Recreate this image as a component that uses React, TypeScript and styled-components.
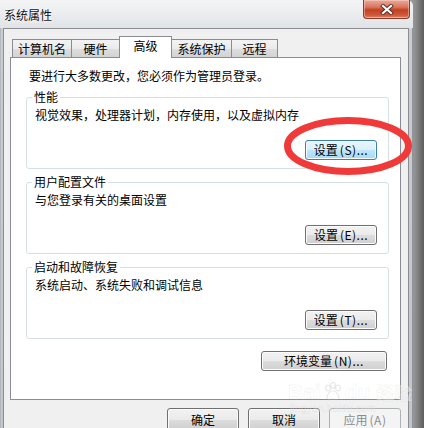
import React from 'react'
import styled, { createGlobalStyle, css } from 'styled-components'

const GlobalStyle = createGlobalStyle`
  html, body {
    margin: 0;
    padding: 0;
    background: #6f6f6f;
  }
  body {
    font-family: 'Noto Sans CJK SC', 'Liberation Sans', sans-serif;
    font-size: 12px;
    color: #000;
  }
`

const Screen = styled.div`
  position: relative;
  width: 424px;
  height: 428px;
  overflow: hidden;
  display: flex;
  background: linear-gradient(to right, #c4c4c4 0px, #9a9a9a 412px, #8c8c8c 416px, #5e5e5e 424px);
`

const Window = styled.div`
  width: 413px;
  height: 440px;
  flex: none;
  display: flex;
  flex-direction: column;
  box-sizing: border-box;
  padding: 0 4px 0 3px;
  border-top-right-radius: 6px;
  background: linear-gradient(to bottom, #eceef0 0px, #e2e5e8 28px, #c9cdd2 29px, #c2c6cb 100%);
  box-shadow: inset -1px 0 0 #8f949a, inset 1px 0 0 #b5b9be;
`

const TitleBar = styled.div`
  height: 28px;
  flex: none;
  margin: 0 -4px 0 -3px;
  display: flex;
  justify-content: space-between;
  align-items: flex-start;
  background: linear-gradient(to bottom, #f3f4f6, #e1e4e8);
  border-top-right-radius: 6px;
`

const Title = styled.div`
  padding: 8px 0 0 4px;
  line-height: 14px;
  font-size: 12px;
  color: #111;
  text-shadow: 0 0 4px #fff, 0 0 2px #fff;
`

const CloseButton = styled.div`
  width: 47px;
  height: 19px;
  margin-right: 3px;
  box-sizing: border-box;
  display: flex;
  align-items: center;
  justify-content: center;
  border: 1px solid #8a3b2c;
  border-top: none;
  border-radius: 0 0 4px 4px;
  background: linear-gradient(to bottom, #e9ab9b 0%, #d8755f 40%, #c3401f 55%, #cf5a3c 85%, #e08a6a 100%);
  box-shadow: inset 0 0 0 1px rgba(255, 220, 210, 0.45);
`

const Client = styled.div`
  flex: 1;
  display: flex;
  flex-direction: column;
  box-sizing: border-box;
  padding: 7px 0 0 6px;
  background: #f0f0f0;
  border: 1px solid #8b8d90;
  border-bottom: none;
`

const TabStrip = styled.div`
  height: 21px;
  display: flex;
  align-items: flex-end;
  margin-left: 2px;
`

const Tab = styled.div<{ $w: number; $active?: boolean }>`
  width: ${p => p.$w}px;
  box-sizing: border-box;
  margin-left: -1px;
  display: flex;
  justify-content: center;
  line-height: 16px;
  font-size: 12px;
  border: 1px solid #898c95;
  border-bottom: none;
  ${p =>
    p.$active
      ? css`
          height: 22px;
          margin-bottom: -1px;
          padding-top: 1px;
          align-items: flex-start;
          background: #fff;
          position: relative;
          z-index: 1;
        `
      : css`
          height: 18px;
          align-items: center;
          background: linear-gradient(to bottom, #f3f3f3 0%, #ebebeb 50%, #dedede 51%, #d3d3d3 100%);
        `}
  &:first-child {
    margin-left: 0;
  }
`

const Panel = styled.div`
  width: 391px;
  height: 343px;
  box-sizing: border-box;
  display: flex;
  flex-direction: column;
  padding: 10px 11px 0 15px;
  background: #fff;
  border: 1px solid #898c95;
`

const Intro = styled.div`
  padding-left: 3px;
  line-height: 16px;
`

const GroupBox = styled.div`
  margin-top: 13px;
  display: flex;
  flex-direction: column;
  padding: 0 11px 8px 8px;
  border: 1px solid #d5dfe5;
  border-radius: 3px;
`

const Legend = styled.div`
  align-self: flex-start;
  margin: -9px 0 0 -3px;
  padding: 0 2px;
  line-height: 16px;
  background: #fff;
`

const Desc = styled.div`
  margin-top: 2px;
  line-height: 16px;
`

const ButtonRow = styled.div<{ $top?: number; $right?: number }>`
  display: flex;
  justify-content: flex-end;
  margin-top: ${p => p.$top ?? 17}px;
  padding-right: ${p => p.$right ?? 0}px;
`

const Button = styled.div<{ $w: number; $h?: number; $hot?: boolean; $disabled?: boolean }>`
  width: ${p => p.$w}px;
  height: ${p => p.$h ?? 20}px;
  box-sizing: border-box;
  display: flex;
  align-items: center;
  justify-content: center;
  font-size: 12px;
  line-height: 14px;
  border-radius: 3px;
  border: 1px solid #707070;
  background: linear-gradient(to bottom, #f2f2f2 0%, #ebebeb 50%, #dddddd 51%, #cfcfcf 100%);
  box-shadow: inset 0 0 0 1px #fbfbfb;
  ${p =>
    p.$hot &&
    css`
      border-color: #3c7fb1;
      background: linear-gradient(to bottom, #eaf6fd 0%, #d9f0fc 50%, #bee6fd 51%, #a7d9f5 100%);
      box-shadow: inset 0 0 0 1px #f4fbff;
    `}
  ${p =>
    p.$disabled &&
    css`
      color: #8d8d8d;
      border-color: #adb2b5;
      background: #f4f4f4;
      box-shadow: none;
    `}
`

const Mnemonic = styled.span`
  letter-spacing: 0.5px;
  margin-left: 2px;
`

const FooterRow = styled.div`
  width: 391px;
  margin-top: 8px;
  display: flex;
  justify-content: flex-end;
  gap: 9px;
`

const Highlight = styled.svg`
  position: absolute;
  left: 280px;
  top: 113px;
  pointer-events: none;
`

const Watermark = styled.div`
  position: absolute;
  left: 288px;
  top: 381px;
  display: flex;
  flex-direction: column;
  align-items: flex-start;
  pointer-events: none;
  color: rgba(255, 255, 255, 0.4);
  -webkit-text-stroke: 0.5px rgba(175, 175, 175, 0.22);
`

const WatermarkMain = styled.div`
  display: flex;
  align-items: center;
  font-family: 'Liberation Sans', sans-serif;
  font-weight: bold;
  font-size: 21px;
  line-height: 22px;
  gap: 2px;
`

const WatermarkCjk = styled.span`
  font-family: 'Noto Sans CJK SC', sans-serif;
  font-size: 18px;
  margin-left: 4px;
`

const WatermarkUrl = styled.div`
  font-family: 'Liberation Sans', sans-serif;
  font-size: 10px;
  line-height: 11px;
  margin-left: 2px;
  letter-spacing: 0.3px;
`

const tabs = [
  { label: '计算机名', w: 60 },
  { label: '硬件', w: 49 },
  { label: '高级', w: 53, active: true },
  { label: '系统保护', w: 61 },
  { label: '远程', w: 47 },
]

const groups = [
  { title: '性能', desc: '视觉效果，处理器计划，内存使用，以及虚拟内存', key: 'S', hot: true },
  { title: '用户配置文件', desc: '与您登录有关的桌面设置', key: 'E' },
  { title: '启动和故障恢复', desc: '系统启动、系统失败和调试信息', key: 'T' },
]

const CloseGlyph = () => (
  <svg width="14" height="11" viewBox="0 0 14 11">
    <path d="M3 2 L11 9 M11 2 L3 9" stroke="#5a2a22" strokeWidth="4" strokeLinecap="square" />
    <path d="M3 2 L11 9 M11 2 L3 9" stroke="#fff" strokeWidth="2.2" strokeLinecap="square" />
  </svg>
)

const Paw = () => (
  <svg width="20" height="20" viewBox="0 0 20 20">
    <g fill="none" stroke="rgba(175,175,175,0.3)" strokeWidth="1.1">
      <ellipse cx="5" cy="6" rx="2.3" ry="3" />
      <ellipse cx="10" cy="3.5" rx="2.3" ry="3" />
      <ellipse cx="15" cy="6" rx="2.3" ry="3" />
      <path d="M4 16 C4 11 8 9 10 9 C12 9 16 11 16 16 C16 18 13 18 10 17 C7 18 4 18 4 16 Z" />
    </g>
  </svg>
)

export default function App() {
  return (
    <Screen>
      <GlobalStyle />
      <Window>
        <TitleBar>
          <Title>系统属性</Title>
          <CloseButton>
            <CloseGlyph />
          </CloseButton>
        </TitleBar>
        <Client>
          <TabStrip>
            {tabs.map(t => (
              <Tab key={t.label} $w={t.w} $active={t.active}>
                {t.label}
              </Tab>
            ))}
          </TabStrip>
          <Panel>
            <Intro>要进行大多数更改，您必须作为管理员登录。</Intro>
            {groups.map(g => (
              <GroupBox key={g.key}>
                <Legend>{g.title}</Legend>
                <Desc>{g.desc}</Desc>
                <ButtonRow>
                  <Button $w={72} $hot={g.hot}>
                    设置<Mnemonic>({g.key})...</Mnemonic>
                  </Button>
                </ButtonRow>
              </GroupBox>
            ))}
            <ButtonRow $top={12} $right={2}>
              <Button $w={126}>
                环境变量<Mnemonic>(N)...</Mnemonic>
              </Button>
            </ButtonRow>
          </Panel>
          <FooterRow>
            <Button $w={72} $h={23}>确定</Button>
            <Button $w={72} $h={23}>取消</Button>
            <Button $w={72} $h={23} $disabled>
              应用<Mnemonic>(A)</Mnemonic>
            </Button>
          </FooterRow>
        </Client>
      </Window>
      <Highlight width="136" height="66" viewBox="0 0 136 66">
        <ellipse cx="68" cy="33" rx="60.5" ry="25.5" fill="none" stroke="#f03a3a" strokeWidth="7" />
      </Highlight>
      <Watermark>
        <WatermarkMain>
          Bai
          <Paw />
          du
          <WatermarkCjk>经验</WatermarkCjk>
        </WatermarkMain>
        <WatermarkUrl>jingyan.baidu.com</WatermarkUrl>
      </Watermark>
    </Screen>
  )
}
